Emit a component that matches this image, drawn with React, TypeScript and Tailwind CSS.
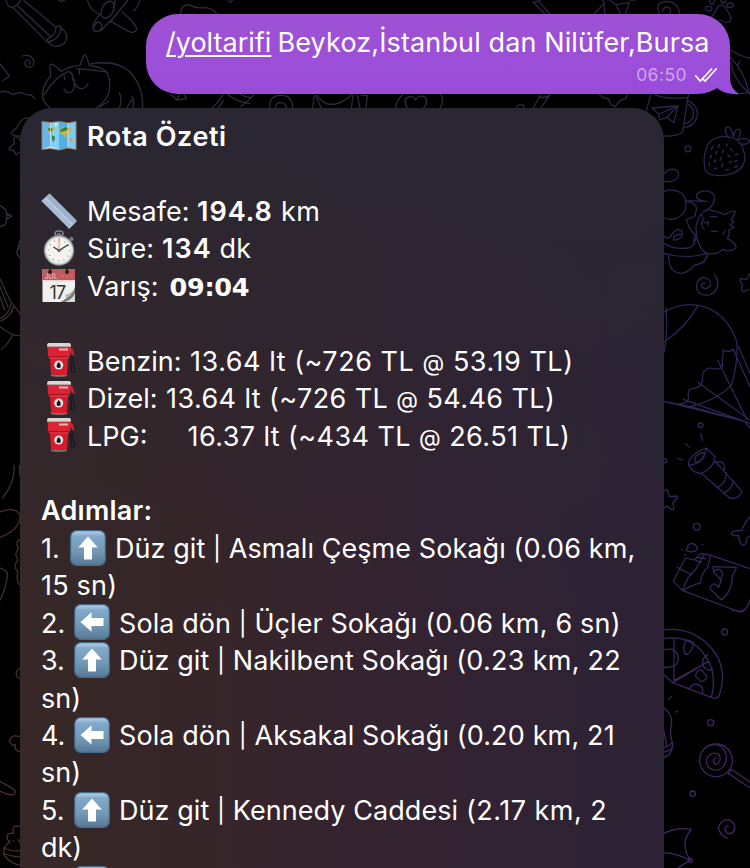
import type { ReactNode } from "react";

function Wallpaper() {
  return (
    <svg
      className="absolute inset-0 h-full w-full"
      viewBox="0 0 750 868"
      fill="none"
      strokeLinecap="round"
      strokeLinejoin="round"
      strokeWidth="3.8"
    >
      <defs>
        <linearGradient id="inkLeft" gradientUnits="userSpaceOnUse" x1="0" y1="0" x2="0" y2="2604">
          <stop offset="0" stopColor="#2d2a42" />
          <stop offset="0.18" stopColor="#302c3c" />
          <stop offset="0.45" stopColor="#402c30" />
          <stop offset="1" stopColor="#4f302c" />
        </linearGradient>
        <linearGradient id="inkRight" gradientUnits="userSpaceOnUse" x1="0" y1="0" x2="0" y2="2604">
          <stop offset="0" stopColor="#2b2448" />
          <stop offset="0.5" stopColor="#33235a" />
          <stop offset="1" stopColor="#412762" />
        </linearGradient>
      </defs>

      <g transform="scale(0.33333)" stroke="url(#inkLeft)">
        {/* pencil */}
        <path d="M18 0Q22 24 38 22Q56 14 62 0M38 22L140 124M50 15L152 110M70 0L168 82M168 82Q186 70 182 94Q170 124 142 126Q136 120 150 112Q168 102 168 82M184 84Q208 104 198 122Q184 144 160 138Q146 132 146 126M176 0Q186 8 194 0" />
        {/* plane */}
        <path d="M262 0Q268 30 300 44M300 44Q274 72 280 90Q296 104 318 76L336 60M332 64L386 94Q404 102 410 88Q408 70 366 36M384 0L330 66M420 0Q416 20 402 32M344 0Q348 10 340 24" />
        <ellipse cx="323" cy="29" rx="17" ry="27" transform="rotate(28 323 29)" />
        <path d="M282 84Q286 62 300 68Q312 78 300 90" />
        <path d="M542 42Q540 18 566 14Q590 28 616 22Q645 28 650 42M684 0Q690 14 698 0" />
        {/* paper and wave */}
        <path d="M0 192L28 228L8 242M0 276Q20 270 38 284Q60 272 78 284Q96 282 104 296" />
        <path d="M66 168Q96 160 102 186Q100 208 80 200Q68 186 84 180Q94 184 88 192" />
        {/* cat */}
        <path d="M152 228L150 196Q154 184 184 214Q210 198 240 196L252 166Q258 158 268 196Q314 202 324 222Q338 270 318 296Q304 316 286 326M152 228Q120 262 130 300Q138 316 150 324M132 284Q170 226 206 214Q222 222 218 240M230 206Q270 208 318 216M270 192Q350 178 390 216Q430 260 428 324M192 266Q196 282 214 276Q226 268 222 238Q224 262 240 266Q260 266 264 250M192 224L194 238M238 208L238 222M358 278Q368 300 358 324M396 300L380 324M300 320L326 304" />
        <path d="M34 402Q30 398 50 384Q64 352 84 354M34 402Q46 410 62 408M398 324Q404 304 396 290" />
        {/* strip between the two bubbles */}
        <path d="M512 282L530 300L560 296L552 284M530 300L538 286M636 324Q660 302 668 284M654 324Q664 312 670 302M684 284Q715 308 750 310M720 282Q736 292 750 292M722 320Q746 302 762 284M810 324Q806 286 842 286Q878 286 878 324M826 324Q828 306 842 308Q856 308 860 324M942 292Q950 282 956 292Q980 324 1020 308Q1046 296 1054 282M942 292L938 324M950 294L964 324M1060 284L1054 324M1072 286L1080 324M1084 286L1102 286L1098 324M1186 324Q1190 300 1208 284M1322 282Q1334 300 1320 324M1222 324Q1206 296 1228 290Q1244 288 1246 300Q1258 282 1276 292Q1286 310 1270 324M1550 322Q1550 312 1572 316L1570 324M1600 324L1620 288M1622 324L1646 290M1616 288Q1630 298 1650 286M1798 284Q1810 296 1826 296Q1830 318 1846 320Q1860 296 1878 296L1882 284" />
        {/* star, fish, brush */}
        <path d="M60 420L50 410L40 414L44 430L28 444Q24 450 42 452L48 464L60 456M0 618Q14 620 20 640L36 648L20 658Q20 678 0 680M20 640V658M24 645L34 648L24 654M60 720L50 760L60 774M54 752L60 736" />
        <path d="M0 836Q16 872 34 908Q52 928 60 942M0 860L24 920M0 956Q28 944 34 908M0 964Q32 952 42 918M0 980Q40 1012 60 1006M4 1048Q22 1036 38 1004M0 890L14 930" />
        <path d="M42 1396Q46 1444 8 1494M58 1396L60 1428M0 1536Q44 1518 60 1544Q62 1590 0 1612M60 1618Q44 1626 56 1646Q40 1660 54 1680Q36 1700 54 1716Q46 1740 60 1756M0 1704Q26 1712 22 1730Q14 1776 0 1800M60 2004Q42 2014 52 2032L60 2034M60 2210Q32 2202 28 2222Q34 2240 46 2234Q42 2252 60 2256M0 2344L38 2366Q52 2372 42 2384Q32 2388 0 2374M60 2480Q34 2470 40 2500Q18 2496 22 2518L30 2526Q14 2532 10 2560Q22 2588 60 2596M10 2544Q40 2556 60 2552M14 2562Q40 2570 60 2570M40 2522V2524M54 2518L58 2526" />
      </g>

      <g transform="scale(0.33333)" stroke="url(#inkRight)">
        {/* top edge */}
        <path d="M1600 6L1634 42M1616 4L1650 42M1598 8L1620 2M1782 42L1812 10L1808 0M1812 10L1814 42M1828 0L1848 14L1888 8L1876 42M1848 14L1862 42M1888 0L1908 0M1978 42Q1962 6 2000 4Q2038 8 2038 42M1986 36Q1990 20 2006 22Q2016 30 2008 40M2136 48Q2130 68 2160 60Q2196 78 2192 50Q2182 32 2176 20Q2158 8 2150 26Q2146 36 2136 48" />
        <ellipse cx="2126" cy="26" rx="10" ry="7" />
        <ellipse cx="2136" cy="3" rx="7" ry="9" />
        <ellipse cx="2170" cy="0" rx="7" ry="9" />
        <ellipse cx="2190" cy="16" rx="10" ry="7" />
        {/* leaf beside the tail */}
        <path d="M2192 150Q2220 170 2250 174M2190 172Q2230 210 2248 278L2206 282M2220 182L2214 196M2192 186Q2200 240 2250 282" />
        {/* mug */}
        <path d="M1952 284L1938 336M1964 284Q2000 300 2064 292L2066 284M2064 292L2048 396Q2030 410 1990 408M2062 300Q2100 320 2090 356Q2076 382 2054 382M2066 314Q2084 324 2080 350Q2068 372 2054 370M1956 324L2034 318L2022 368L2000 352L1978 360L1976 342L1956 324M1976 342L2034 318L2000 352" />
        <circle cx="2064" cy="446" r="9" />
        {/* strawberry */}
        <path d="M2200 414Q2148 400 2124 432Q2106 470 2116 510Q2126 530 2172 526Q2240 516 2234 464Q2226 424 2200 414M2186 414Q2168 388 2182 380Q2196 382 2200 410Q2204 384 2218 388Q2226 400 2212 420Q2240 410 2250 424Q2240 438 2218 430" />
        <path strokeWidth="4.5" d="M2138 440l-3 8M2158 434l-3 8M2182 432l-3 6M2134 466l-3 8M2150 454l-2 8M2170 450l-3 8M2192 446l5 6M2206 464l8-2M2146 480l-3 7M2164 472l-3 8M2184 466l6 4M2204 484l8-3M2128 490l-1 7M2150 504l-6 3M2168 492l-3 8M2188 488l8-3M2186 508l-8 2M2212 498l-8 4" />
        {/* sleeping dog */}
        <path d="M1992 522Q2004 506 2024 508Q2040 516 2034 532Q2016 550 1992 544M1992 574Q2022 564 2048 582Q2068 612 2050 640Q2026 666 1992 654M2058 602L2122 604M2058 602Q2100 612 2086 640Q2090 650 2060 658Q2062 680 2084 704Q2092 718 2080 730M2122 604Q2080 600 2092 580Q2120 564 2142 584Q2150 608 2124 628Q2094 640 2088 680Q2088 740 2120 760Q2150 766 2168 748Q2190 758 2208 744Q2210 730 2182 716Q2192 696 2186 690L2202 682L2190 674L2202 666L2194 660L2206 636Q2200 628 2176 644Q2150 634 2124 628M2104 644Q2114 654 2106 668M2106 668Q2102 680 2112 686M2112 668h14M2124 664v12M2132 650h18M2134 694h18M2170 702l4-10M1992 710Q2010 720 2016 702Q2034 680 2046 694Q2050 720 2020 720Q2020 700 2048 704M1992 730Q2020 750 2066 744Q2090 736 2080 714M1992 760Q2060 780 2120 760M2006 768Q2006 820 2046 820Q2070 814 2082 796Q2120 790 2122 764" />
        <path d="M2144 824Q2164 850 2144 876Q2118 896 2094 876Q2080 846 2108 832Q2136 836 2130 858Q2116 874 2104 858Q2104 848 2116 850" />
        <path d="M2250 820L2240 838L2222 836Q2216 842 2228 854Q2220 872 2230 876L2246 868" />
        {/* parachute */}
        <path d="M1992 936Q2050 902 2110 920Q2180 940 2210 1024Q2216 1080 2194 1156Q2150 1200 2070 1220L1992 1204M1998 922Q2004 1000 1992 1056M1992 1026Q2060 980 2094 916M2170 1050Q2170 1070 2166 1078Q2172 1102 2158 1106Q2144 1108 2130 1104Q2104 1110 2108 1138Q2106 1160 2080 1166Q2060 1164 2066 1196Q2056 1218 2010 1210M2170 1050Q2186 1060 2200 1048M2154 1082L2240 1258M2092 1146L2250 1260M2050 1198L2250 1270M2070 1220L2234 1264M2200 1048L2250 1160M2216 1040L2250 1120M1992 1204L2234 1264L2250 1284" />
        {/* flashlight */}
        <path d="M2118 1344Q2062 1368 2066 1396Q2080 1420 2104 1420Q2140 1406 2146 1370L2118 1344M2066 1396Q2112 1392 2118 1346M2086 1386Q2078 1368 2106 1358Q2122 1362 2106 1378Q2094 1388 2086 1386M2104 1420L2186 1492Q2212 1504 2226 1474L2146 1384M2144 1388Q2170 1378 2174 1402L2172 1412M2178 1418Q2180 1448 2154 1462M2200 1442Q2196 1470 2172 1478M2102 1300L2108 1322M2056 1330L2068 1342M2034 1376L2048 1380" />
        <circle cx="2102" cy="1276" r="7" />
        <circle cx="1994" cy="1382" r="6" />
        <path d="M1992 1474L2002 1468L2008 1490L2030 1488Q2036 1494 2018 1508L2022 1526Q2018 1534 2002 1518L1992 1524" />
        <circle cx="2090" cy="1580" r="10" />
        <path d="M2250 1550Q2226 1580 2226 1592Q2192 1590 2194 1602Q2204 1610 2216 1606Q2218 1634 2230 1636Q2242 1630 2240 1614L2250 1608" />
        {/* sweets packet */}
        <path d="M2064 1642Q2060 1632 2078 1630Q2098 1640 2088 1652Q2070 1660 2058 1650L2064 1642M2056 1674L2020 1744L2048 1772L2220 1836Q2238 1836 2250 1800M2056 1674L2084 1680L2102 1660L2126 1664L2250 1706M2048 1772Q2060 1730 2086 1710L2112 1664M2048 1772Q2080 1752 2100 1750Q2104 1720 2124 1700L2132 1664M2032 1702L2070 1722M2084 1680L2106 1688M2092 1672L2116 1676M2140 1700L2210 1702L2196 1730Q2200 1770 2164 1800L2130 1766Q2140 1740 2156 1762L2164 1740L2140 1716L2140 1700M2140 1716Q2162 1696 2168 1724L2160 1740" />
        <circle cx="2046" cy="1650" r="1" />
        <circle cx="2108" cy="1634" r="1" />
        <circle cx="2056" cy="1664" r="1" />
        <path d="M2196 1830Q2214 1838 2232 1830" />
        <circle cx="2174" cy="1896" r="9" />
        {/* pizza */}
        <path d="M1992 1890Q2060 1880 2114 1924Q2190 1990 2158 2086Q2150 2100 2134 2092L2018 2048L1992 2024M1992 1916Q2050 1906 2092 1940Q2158 2000 2134 2092M2022 1916V2042L2126 1984M2018 2048L2126 1984M1992 1950Q2030 1940 2036 1974Q2034 2004 1992 2002M2124 1964Q2106 1970 2108 1994Q2116 2012 2138 2010M2068 2068Q2076 2048 2096 2054Q2112 2062 2108 2080M2054 1932Q2056 1912 2072 1924Q2088 1930 2078 1938Q2076 1956 2058 1964Q2046 1950 2054 1932M2092 2014Q2104 2002 2112 2020Q2128 2030 2114 2040Q2100 2050 2096 2036Q2080 2032 2092 2014M2006 2098l8-8M2026 2136l7-2" />
        <circle cx="2132" cy="2168" r="9" />
        {/* bulb */}
        <path d="M1992 2124Q2020 2144 2014 2176Q2008 2200 2018 2232Q2016 2268 1992 2272M1992 2242Q2006 2240 2016 2228M1992 2256Q2012 2252 2018 2242M1992 2194L2000 2238" />
        {/* lollipop */}
        <circle cx="2148" cy="2281" r="49" />
        <path d="M2124 2238Q2168 2222 2180 2270Q2176 2312 2144 2310Q2116 2306 2120 2276Q2136 2250 2158 2264Q2166 2286 2148 2294Q2132 2282 2148 2272M2184 2320L2194 2308L2250 2346M2184 2320L2250 2364" />
        <circle cx="2078" cy="2381" r="8" />
        <path d="M2182 2515Q2156 2504 2156 2480Q2166 2456 2190 2460Q2214 2476 2198 2498Q2180 2506 2174 2488Q2178 2476 2186 2478" />
        {/* kite */}
        <path d="M1992 2500Q2030 2480 2074 2488Q2038 2528 2070 2580Q2030 2560 1992 2558M2070 2580L2034 2604" />
        <circle cx="2071" cy="2581" r="6" />
      </g>
    </svg>
  );
}

function MapIcon() {
  return (
    <svg className="h-9 w-9 shrink-0" viewBox="0 0 36 36">
      <path d="M.5 3L9.5 4L18.5 3L27 4.5L35.5 3V32L27 30.5L18 32.5L9 31L.5 32Z" fill="#a67e5b" />
      <path d="M1.5 4L9.5 5V30L1.5 31Z" fill="#62b9ed" />
      <path d="M9.5 5L18 4V31.5L9.5 30Z" fill="#82d2f8" />
      <path d="M18 4L27 5.5V29.5L18 31.5Z" fill="#55afe5" />
      <path d="M27 5.5L34.5 4V31L27 29.5Z" fill="#7bccf5" />
      <path d="M6 11L9 9L14 10L13 12L11 14L10 17L7 14ZM18 14L20 10L24 9L31 10L30 13L27 15L25 19L23 19L22 16L19 16Z" fill="#c9b545" />
      <path d="M6 11L9 10L12 11L10 14L7 12ZM20 11L25 9L28 11L24 13L19 14ZM11 17L14 19L13 24L11 22Z" fill="#3f7c43" />
      <path d="M13 5L17 5L15 9Z" fill="#d8eaec" />
      <path d="M28 21L31 20L32 23L29 24Z" fill="#e59a3a" />
      <path d="M9.5 5V30M27 5V29.5" stroke="#d1f1ff" strokeWidth=".7" />
      <path d="M2 31Q8 26 17 31L9 30Z" fill="#dfe7e9" opacity=".7" />
    </svg>
  );
}

function RulerIcon() {
  return (
    <svg className="h-9 w-9 shrink-0" viewBox="0 0 36 36">
      <path d="M.5 8L8.500 .5L35.500 27.500L28 35.500Z" fill="#8fa4bf" />
      <path d="M.5 8L4 4.500L31.500 32L28 35.500Z" fill="#a9bcd4" />
      <path d="M4 4.500L8.500 .5L35.500 27.500L32 31.500Z" fill="#9db1ca" />
      <path d="M4.500 5L31.500 31.500" stroke="#c3d2e5" strokeWidth="1.200" />
      <path d="M28 35.500L35.500 28" stroke="#c8d6e8" />
    </svg>
  );
}

function StopwatchIcon() {
  return (
    <svg className="h-9 w-9 shrink-0" viewBox="0 0 36 36" fill="none">
      <ellipse cx="18" cy="3.500" rx="4" ry="2.600" stroke="#8a929b" strokeWidth="1.400" />
      <path d="M16 3H20V7H16Z" fill="#66707b" />
      <path d="M29 8L32 10" stroke="#707b86" strokeWidth="3.500" />
      <circle cx="18" cy="20.500" r="15.200" fill="#89929a" />
      <circle cx="18" cy="20.500" r="14" fill="#d8d8d6" />
      <circle cx="18" cy="20.500" r="12.500" fill="#f4f3ef" />
      <circle cx="18" cy="20.500" r="10.500" stroke="#777" strokeWidth="1.400" strokeDasharray=".7 4.8" />
      <path d="M18 20.500V8" stroke="#e5815c" strokeWidth=".9" />
      <path d="M12.500 17L18 20.500L27.500 14.500" stroke="#34383b" strokeWidth="1.400" />
      <circle cx="18" cy="20.500" r="1.600" fill="#725d53" />
    </svg>
  );
}

function CalendarIcon() {
  return (
    <svg className="h-9 w-9 shrink-0" viewBox="0 0 36 36">
      <path d="M1.500 2H34V35H1.500Z" fill="#f0f0ef" />
      <path d="M1.500 2H34V14H1.500Z" fill="#c2575c" />
      <path d="M1.500 13H34V14.500H1.500Z" fill="#e7d5d5" />
      <text x="3.500" y="12" fontFamily="Inter, sans-serif" fontSize="7" fontWeight="700" fill="#e3a9aa">JUL</text>
      <path d="M19 9H32" stroke="#cf6a6e" strokeWidth="3" strokeDasharray="1.500 1" />
      <text x="8.500" y="31.500" fontFamily="Inter, sans-serif" fontSize="18" letterSpacing="-.8" fill="#333">17</text>
      <path d="M34 20Q32 26 24 28Q27 31 20 35H34Z" fill="#b7b9b9" />
      <path d="M34 20Q33 28 20 35H34Z" fill="#74787a" />
      <path d="M34 26Q32 32 24 35H34Z" fill="#d7d8d8" />
      <path d="M9 0V4M26 0V4" stroke="#26262a" strokeWidth="1.800" />
      <circle cx="9" cy="5" r="2" fill="#211d22" />
      <circle cx="26" cy="5" r="2" fill="#211d22" />
    </svg>
  );
}

function FuelIcon() {
  return (
    <svg className="h-9 w-9 shrink-0" viewBox="0 0 36 36">
      <ellipse cx="18" cy="33.500" rx="8.500" ry="1.400" fill="#777375" />
      <path d="M31 13L33.500 27Q35 30 32 30.500Q29 30 30.500 24L29 14" fill="none" stroke="#19171b" strokeWidth="1.200" />
      <path d="M29 5.500L32 7L33.500 14L31 13L29 9Z" fill="#c02834" />
      <path d="M6.500 2H29.800L29 15.500H7Z" fill="#dd2333" />
      <path d="M8.800 15H27.200L26 33H10.200Z" fill="#d71b2c" />
      <path d="M6.200 2L7.500 1H28.500L29.800 2V5H6.200Z" fill="#dad7d7" />
      <path d="M6.200 4.700H29.800" stroke="#9b7375" strokeWidth=".7" />
      <path d="M7 14.700H29" stroke="#9e1722" strokeWidth="1.400" />
      <path d="M8.500 16H27.500" stroke="#ed5260" strokeWidth=".8" />
      <path d="M18 7.500H27" stroke="#f0b8bb" strokeWidth="2" />
      <circle cx="17.700" cy="23" r="4.500" fill="#e5e6e8" />
      <path d="M17.700 19.800L19.500 22.500Q20.500 26 17.700 26Q14.900 26 15.900 22.500Z" fill="#151417" />
    </svg>
  );
}

function ArrowIcon({ left = false }: { left?: boolean }) {
  return (
    <svg className="h-9 w-9 shrink-0" viewBox="0 0 36 36">
      <defs>
        <linearGradient id="key" x1="0" y1="0" x2="0" y2="1">
          <stop offset="0" stopColor="#b9d3e8" />
          <stop offset=".16" stopColor="#82a9ca" />
          <stop offset=".6" stopColor="#7398b6" />
          <stop offset="1" stopColor="#577895" />
        </linearGradient>
      </defs>
      <rect x=".7" y=".7" width="34.600" height="34.600" rx="6" fill="url(#key)" stroke="#456b8c" strokeWidth="1.200" />
      <path
        transform={left ? "rotate(-90 18 18)" : undefined}
        d="M18 6.500L27.800 17.500H22V29.500H14V17.500H8.200Z"
        fill="#fff"
      />
    </svg>
  );
}

function Row({ children }: { children?: ReactNode }) {
  return (
    <div className="flex h-[37.45px] shrink-0 items-center whitespace-pre [&>span]:pt-0.5">
      {children}
    </div>
  );
}

type StepProps = { n: string; left?: boolean; action: string; street: string; detail: string; track: string; narrow?: boolean };

function Step({ n, left, action, street, detail, track, narrow }: StepProps) {
  return (
    <Row>
      <span className={narrow ? "w-[29px]" : "w-[33px]"}>{n}</span>
      <ArrowIcon left={left} />
      <span className="ml-[9px] tracking-[0.07px]">
        {action} <i className="align-[1px] text-[24px] leading-none not-italic">|</i> {street}{" "}
        <span className={track}>{detail}</span>
      </span>
    </Row>
  );
}

function At() {
  return <i className="text-[22.5px] leading-none not-italic">@</i>;
}

export default function App() {
  return (
    <main className="relative flex h-[868px] w-[750px] flex-col overflow-hidden bg-black pt-3.5 font-['Inter',sans-serif] text-[27px] leading-[37.45px] text-white">
      <Wallpaper />

      <section className="relative ml-[146px] flex h-20 w-[584px] shrink-0 flex-col rounded-[32px] bg-linear-to-b from-[#9e52d3] to-[#9a4cda] pl-5 pt-2.5">
        <div className="flex h-[37px] items-center whitespace-pre">
          <span className="w-[111.5px] underline decoration-[1.5px] underline-offset-[3px]">/yoltarifi</span>
          <span className="tracking-[0.12px]">Beykoz,İstanbul dan Nilüfer,Bursa</span>
        </div>
        <div className="mr-[13px] mt-0.5 flex h-6 items-center justify-end gap-2 text-[17.5px] leading-6 text-[#cda6e9]">
          <span className="tracking-[0.45px]">06:50</span>
          <svg className="h-4 w-[22px]" viewBox="0 0 22 16" fill="none" stroke="white" strokeWidth="1.700" strokeLinecap="round" strokeLinejoin="round">
            <path d="M.8 9L5.300 14.200L16.600 2M8.600 12.600L10 14.200L21.200 2" />
          </svg>
        </div>
        <svg className="absolute left-[554px] top-[46px] h-[34px] w-10" viewBox="0 0 40 34">
          <path d="M30 2V17Q30 29 39 34Q26 35 16.700 28Z" fill="#9a4cda" />
        </svg>
      </section>

      <section className="relative ml-5 mt-3.5 flex h-[770px] w-[644px] shrink-0 flex-col rounded-t-[32px] bg-[linear-gradient(180deg,#292732_0%,#29263290_22%,transparent_65%),linear-gradient(90deg,#372827_0%,#362528_28%,#342331_60%,#2b2235_100%)] pl-[21px] pt-[9px]">
        <Row>
          <MapIcon />
          <span className="ml-2.5 font-semibold tracking-[0.6px]">Rota Özeti</span>
        </Row>
        <Row />
        <Row>
          <RulerIcon />
          <span className="ml-2.5">
            <span className="tracking-[0.03px]">Mesafe: </span>
            <b className="font-semibold tracking-[0.95px]">194.8</b>
            <span className="tracking-[0.5px]"> km</span>
          </span>
        </Row>
        <Row>
          <StopwatchIcon />
          <span className="ml-2.5">
            <span className="tracking-[0.15px]">Süre: </span>
            <b className="font-semibold tracking-[1px]">134</b>
            <span className="tracking-[0.3px]"> dk</span>
          </span>
        </Row>
        <Row>
          <CalendarIcon />
          <span className="ml-2.5 w-[82.5px]">Varış:</span>
          <span>
            <b className="font-['DejaVu_Sans',sans-serif] text-[25.5px] font-bold leading-none tracking-[-0.3px]">09:04</b>
          </span>
        </Row>
        <Row />
        <Row>
          <FuelIcon />
          <span className="ml-2.5 w-[103px]">Benzin:</span>
          <span className="tracking-[0.54px]">13.64 lt (~726 TL <At /> 53.19 TL)</span>
        </Row>
        <Row>
          <FuelIcon />
          <span className="ml-2.5 w-[79px]">Dizel:</span>
          <span className="tracking-[0.42px]">13.64 lt (~726 TL <At /> 54.46 TL)</span>
        </Row>
        <Row>
          <FuelIcon />
          <span className="ml-2.5 w-[100.5px]">LPG:</span>
          <span className="tracking-[0.42px]">16.37 lt (~434 TL <At /> 26.51 TL)</span>
        </Row>
        <Row />
        <Row><span className="font-semibold tracking-[0.25px]">Adımlar:</span></Row>
        <Step n="1." narrow action="Düz git" street="Asmalı Çeşme Sokağı" detail="(0.06 km," track="tracking-[0.1px]" />
        <Row><span className="tracking-[0.2px]">15 sn)</span></Row>
        <Step n="2." left action="Sola dön" street="Üçler Sokağı" detail="(0.06 km, 6 sn)" track="tracking-[0.18px]" />
        <Step n="3." action="Düz git" street="Nakilbent Sokağı" detail="(0.23 km, 22" track="tracking-[0.28px]" />
        <Row><span>sn)</span></Row>
        <Step n="4." left action="Sola dön" street="Aksakal Sokağı" detail="(0.20 km, 21" track="tracking-[0.15px]" />
        <Row><span>sn)</span></Row>
        <Step n="5." action="Düz git" street="Kennedy Caddesi" detail="(2.17 km, 2" track="tracking-[0.5px]" />
        <Row><span>dk)</span></Row>
        <div className="flex h-[37.45px] shrink-0 items-center pl-[33px]">
          <ArrowIcon left />
        </div>
      </section>
    </main>
  );
}
